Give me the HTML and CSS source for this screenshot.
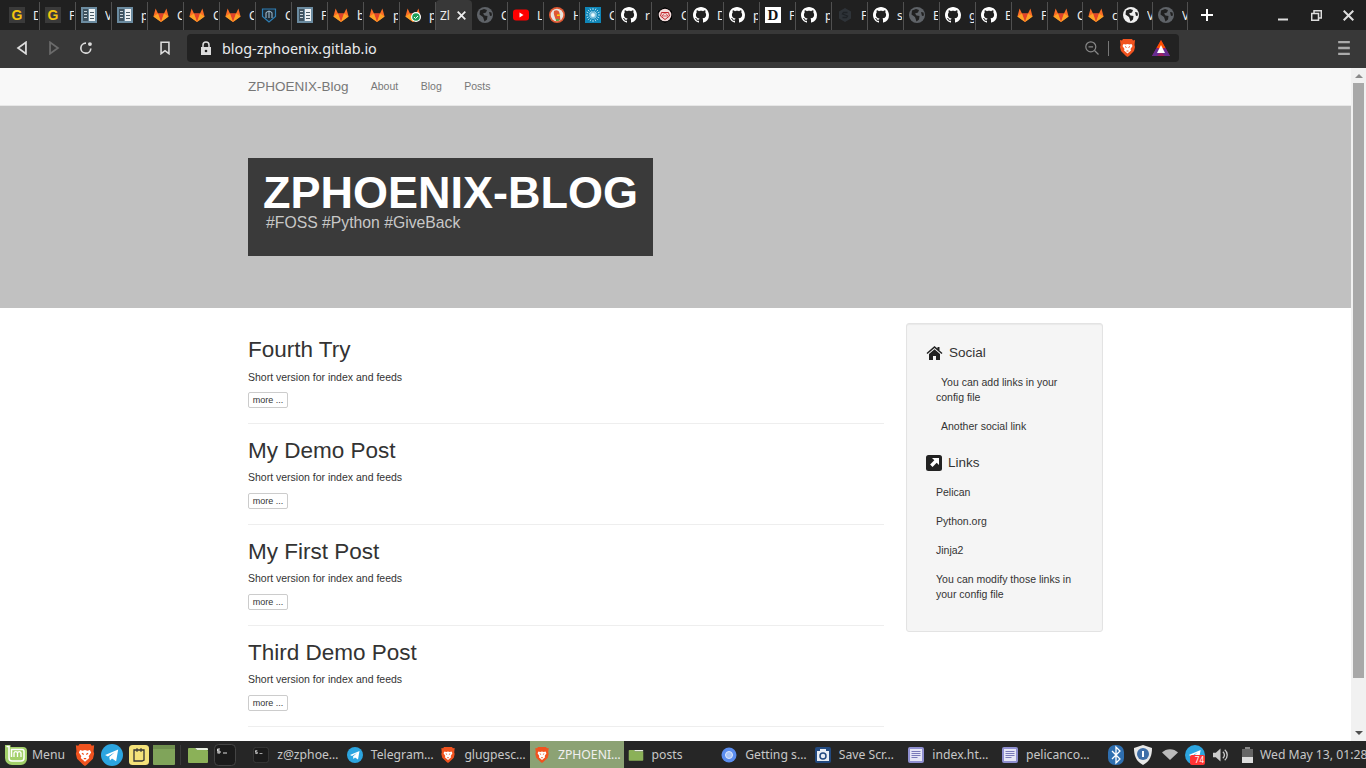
FILE: index.html
```html
<!DOCTYPE html>
<html lang="en">
<head>
    <meta charset="UTF-8">
    <meta name="viewport" content="width=device-width, initial-scale=1.0">
    <title>ZPHOENIX-Blog</title>
    <link rel="stylesheet" href="styles.css">
</head>
<body>
    <svg class="sprites" width="0" height="0">
        <symbol id="i-doc" viewBox="0 0 16 16"><rect width="16" height="16" fill="#6b8ba0"/><rect x="2" y="2" width="5" height="12" fill="#3f525f"/><rect x="8" y="2" width="6" height="12" fill="#eef2f4"/><path d="M3 4h3v1H3zM3 7h3v1H3zM3 10h3v1H3z" fill="#c9d4da"/><path d="M9 5h4v1H9zM9 8h4v1H9zM9 11h4v1H9z" fill="#4c5d68"/></symbol>
        <symbol id="i-gitlab" viewBox="0 0 16 16"><path d="M8 15 .4 9.4 2.6 1.5 5 6.6h6l2.400-5.100 2.200 7.900z" fill="#fc6d26"/><path d="M8 15 5 6.600h6z" fill="#e24329"/><path d="M8 15 .4 9.400 5 6.600zM8 15l7.600-5.600L11 6.600z" fill="#fca326"/></symbol>
        <symbol id="i-shield" viewBox="0 0 16 16"><path d="M1.500 2h13v7.500L8 15 1.500 9.500z" fill="#1d2b36" stroke="#2f7fb5" stroke-width="1.200"/><path d="M5 11V5.500L8 4l3 1.500V11M8 4v7" fill="none" stroke="#a9c4d6"/></symbol>
        <symbol id="i-globe" viewBox="0 0 16 16"><circle cx="8" cy="8" r="8" fill="currentColor"/><path d="M3 3.500 7 2l3 1-1 2.500-3 1 1.500 2 3 .5-.5 3.500-2.500 2L6 10 2.500 7.500zM12 5l2.500.5.5 3-2 .5z" fill="#202020"/></symbol>
        <symbol id="i-yt" viewBox="0 0 16 16"><rect y="2.500" width="16" height="11" rx="3" fill="#f00"/><path d="m6.500 5.500 4 2.500-4 2.500z" fill="#fff"/></symbol>
        <symbol id="i-ddg" viewBox="0 0 16 16"><circle cx="8" cy="8" r="8" fill="#de5833"/><circle cx="8" cy="8" r="6.300" fill="#e8e3df"/><path d="M5 4c2-1.500 5-1 5.500 2 .5 2 .5 5 1 7.500H7C6 10 4 7 5 4z" fill="#de5833"/><path d="M8 7.500h3.500l-1 1.500H8z" fill="#fdd20a"/><path d="M7 12h3.500l-1 2H7z" fill="#5aa845"/></symbol>
        <symbol id="i-burst" viewBox="0 0 16 16"><rect width="16" height="16" fill="#0f86b8"/><path d="M8 1v14M1 8h14M3 3l10 10M13 3 3 13M5 1.500l6 13M11 1.500l-6 13M1.500 5l13 6M14.500 5l-13 6" stroke="#cfeefa" stroke-width=".8" stroke-dasharray="2 1"/><circle cx="8" cy="8" r="2" fill="#e8fafe"/></symbol>
        <symbol id="i-github" viewBox="0 0 16 16"><path fill="#fff" d="M8 0C3.580 0 0 3.580 0 8c0 3.540 2.290 6.530 5.470 7.590.4.070.55-.17.55-.38 0-.19-.01-.82-.01-1.490-2.010.37-2.530-.49-2.690-.94-.09-.23-.48-.94-.82-1.130-.28-.15-.68-.52-.01-.53.63-.01 1.080.58 1.230.82.72 1.210 1.870.87 2.330.66.07-.52.28-.87.51-1.070-1.780-.2-3.640-.89-3.640-3.950 0-.87.31-1.590.82-2.150-.08-.2-.36-1.020.08-2.120 0 0 .67-.21 2.200.82.64-.18 1.320-.27 2-.27.68 0 1.360.09 2 .27 1.530-1.040 2.200-.82 2.200-.82.44 1.100.16 1.920.08 2.120.51.56.82 1.270.82 2.150 0 3.070-1.870 3.750-3.650 3.950.29.25.54.73.54 1.480 0 1.070-.01 1.930-.01 2.200 0 .21.15.46.55.38A8.013 8.013 0 0016 8c0-4.420-3.580-8-8-8z"/></symbol>
        <symbol id="i-d20" viewBox="0 0 16 16"><path d="M8 0l7 4v8l-7 4-7-4V4z" fill="#000"/><circle cx="8" cy="8" r="6.300" fill="#f3dcdc"/><path d="M4.500 5.500h7l1 3.500L8 12.500 3.500 9z" fill="none" stroke="#c4252b"/><path d="M8 5.500 5 9h6z" fill="none" stroke="#c4252b" stroke-width=".7"/></symbol>
        <symbol id="i-hex" viewBox="0 0 16 16"><path d="M8 1l6 3.500v7L8 15l-6-3.500v-7z" fill="#2e3338"/><path d="M10.500 5.500h-4l-1 1.500 5 2-1 1.500h-4" fill="none" stroke="#1e2226" stroke-width="1.300"/></symbol>
        <symbol id="i-brave" viewBox="0 0 16 18"><path d="M3.500 0h9l1 1.500L15.500 1 15 6l.5 2-1 4-5 5-1.500 1-1.500-1-5-5-1-4L1 6 .5 1l2 .5z" fill="#f1531f"/><path d="M4 5l2 .5L8 5l2 .5L12 5l1 2-2 3 .5 1.500L8 14.500 4.500 11.500 5 10 3 7z" fill="#fff"/><path d="M5.500 7.500 7 8.500M10.500 7.500 9 8.500M7 12h2" stroke="#f1531f"/></symbol>
        <symbol id="i-bat" viewBox="0 0 18 16"><path d="M9 0l9 16H0z" fill="#9e1f63"/><path d="M9 0l4.500 8H4.500z" fill="#ff5000"/><path d="M0 16l4.500-8L9 12l-4 4zM18 16l-4.500-8L9 12l4 4z" fill="#662d91"/><path d="M9 5l4 8H5z" fill="#fff"/></symbol>
        <symbol id="i-telegram" viewBox="0 0 16 16"><circle cx="8" cy="8" r="8" fill="#2ca5e0"/><path d="M3 8l9.500-4-1.500 8.500-3-2-1.500 1.500-.5-2.500 4-3.500-5 3z" fill="#fff"/></symbol>
        <symbol id="i-folder" viewBox="0 0 22 18"><path d="M1 3a1 1 0 011-1h6l2 2h10a1 1 0 011 1v11a1 1 0 01-1 1H2a1 1 0 01-1-1z" fill="#8bb158"/><path d="M8 2l2 2h11V3a1 1 0 00-1-1z" fill="#e8efe0"/></symbol>
        <symbol id="i-term" viewBox="0 0 22 22"><rect x=".5" y=".5" width="21" height="21" rx="4" fill="#1b1b1b" stroke="#444"/><path d="M4 5v4M6 5H3.500v2H6v2H3.500M9 9h4" stroke="#ddd" fill="none"/></symbol>
        <symbol id="i-textdoc" viewBox="0 0 16 16"><rect width="16" height="16" rx="2" fill="#8f8fd0"/><rect x="2" y="2" width="12" height="12" fill="#e6e6f6"/><path d="M3.500 4.500h9M3.500 6.500h9M3.500 8.500h9M3.500 10.500h6" stroke="#7a7ab8"/></symbol>
    </svg>

    <div class="screen">
        <div class="tabstrip">
            <div class="tab"><span class="fav-g">G</span><span class="tab-label">D</span></div>
            <div class="tab"><span class="fav-g">G</span><span class="tab-label">F</span></div>
            <div class="tab"><svg class="fav"><use href="#i-doc"/></svg><span class="tab-label">V</span></div>
            <div class="tab"><svg class="fav"><use href="#i-doc"/></svg><span class="tab-label">p</span></div>
            <div class="tab"><svg class="fav"><use href="#i-gitlab"/></svg><span class="tab-label">C</span></div>
            <div class="tab"><svg class="fav"><use href="#i-gitlab"/></svg><span class="tab-label">C</span></div>
            <div class="tab"><svg class="fav"><use href="#i-gitlab"/></svg><span class="tab-label">C</span></div>
            <div class="tab"><svg class="fav"><use href="#i-shield"/></svg><span class="tab-label">C</span></div>
            <div class="tab"><svg class="fav"><use href="#i-doc"/></svg><span class="tab-label">F</span></div>
            <div class="tab"><svg class="fav"><use href="#i-gitlab"/></svg><span class="tab-label">b</span></div>
            <div class="tab"><svg class="fav"><use href="#i-gitlab"/></svg><span class="tab-label">p</span></div>
            <div class="tab"><svg class="fav"><use href="#i-gitlab"/></svg><svg class="check" viewBox="0 0 10 10"><circle cx="5" cy="5" r="5" fill="#fff"/><circle cx="5" cy="5" r="3.800" fill="#1f9d55"/><path d="M3 5l1.500 1.500L7 4" fill="none" stroke="#fff"/></svg><span class="tab-label">p</span></div>
            <div class="tab tab-active"><span class="tab-label">Zl</span><svg class="tab-close" viewBox="0 0 9 9"><path d="M.7.700l7.600 7.600M8.300.700.700 8.300" stroke="#eee" stroke-width="1.800"/></svg></div>
            <div class="tab"><svg class="fav globe-dim"><use href="#i-globe"/></svg><span class="tab-label">C</span></div>
            <div class="tab"><svg class="fav"><use href="#i-yt"/></svg><span class="tab-label">L</span></div>
            <div class="tab"><svg class="fav"><use href="#i-ddg"/></svg><span class="tab-label">H</span></div>
            <div class="tab"><svg class="fav"><use href="#i-burst"/></svg><span class="tab-label">C</span></div>
            <div class="tab"><svg class="fav"><use href="#i-github"/></svg><span class="tab-label">r</span></div>
            <div class="tab"><svg class="fav"><use href="#i-d20"/></svg><span class="tab-label">C</span></div>
            <div class="tab"><svg class="fav"><use href="#i-github"/></svg><span class="tab-label">D</span></div>
            <div class="tab"><svg class="fav"><use href="#i-github"/></svg><span class="tab-label">p</span></div>
            <div class="tab"><span class="fav-d">D</span><span class="tab-label">F</span></div>
            <div class="tab"><svg class="fav"><use href="#i-github"/></svg><span class="tab-label">p</span></div>
            <div class="tab"><svg class="fav"><use href="#i-hex"/></svg><span class="tab-label">F</span></div>
            <div class="tab"><svg class="fav"><use href="#i-github"/></svg><span class="tab-label">s</span></div>
            <div class="tab"><svg class="fav globe-dim"><use href="#i-globe"/></svg><span class="tab-label">E</span></div>
            <div class="tab"><svg class="fav"><use href="#i-github"/></svg><span class="tab-label">g</span></div>
            <div class="tab"><svg class="fav"><use href="#i-github"/></svg><span class="tab-label">E</span></div>
            <div class="tab"><svg class="fav"><use href="#i-gitlab"/></svg><span class="tab-label">F</span></div>
            <div class="tab tab-narrow"><svg class="fav"><use href="#i-gitlab"/></svg><span class="tab-label">C</span></div>
            <div class="tab tab-narrow"><svg class="fav"><use href="#i-gitlab"/></svg><span class="tab-label">c</span></div>
            <div class="tab tab-narrow"><svg class="fav globe-bright"><use href="#i-globe"/></svg><span class="tab-label">V</span></div>
            <div class="tab tab-narrow"><svg class="fav globe-dim"><use href="#i-globe"/></svg><span class="tab-label">V</span></div>
            <svg class="new-tab" viewBox="0 0 12 12"><path d="M6 0v12M0 6h12" stroke="#fff" stroke-width="2"/></svg>
            <div class="win-controls">
                <svg viewBox="0 0 11 11"><path d="M0 9.500h10" stroke="#ddd" stroke-width="2"/></svg>
                <svg viewBox="0 0 11 11"><path d="M3 3V.7h7.300V8H8M.7 3.500h6.800v6.800H.7z" fill="none" stroke="#ddd" stroke-width="1.500"/></svg>
                <svg viewBox="0 0 11 11"><path d="M.7.700l9.600 9.600M10.300.700.700 10.300" stroke="#ddd" stroke-width="2"/></svg>
            </div>
        </div>

        <div class="toolbar">
            <button class="tool-btn"><svg viewBox="0 0 12 16"><path d="M10.500 1.500v13L1.500 8z" fill="none" stroke="#ddd" stroke-width="2"/></svg></button>
            <button class="tool-btn"><svg viewBox="0 0 12 16"><path d="M1.500 1.500v13l9-6.500z" fill="none" stroke="#6b6b6b" stroke-width="2"/></svg></button>
            <button class="tool-btn"><svg viewBox="0 0 16 16"><path d="M13.500 8.500A5.700 5.700 0 118 2.500" fill="none" stroke="#ddd" stroke-width="1.900"/><circle cx="12.500" cy="3.500" r="2.200" fill="#ddd"/></svg></button>
            <button class="tool-btn bookmark"><svg viewBox="0 0 12 16"><path d="M1.500 1.500h9v13L6 11l-4.500 3.500z" fill="none" stroke="#ddd" stroke-width="1.800"/></svg></button>
            <div class="urlbar">
                <svg class="lock" viewBox="0 0 12 14"><path d="M3 6V4a3 3 0 016 0v2" fill="none" stroke="#ddd" stroke-width="1.500"/><path d="M1 6h10v8H1z" fill="#ddd"/><circle cx="6" cy="10" r="1.300" fill="#222"/></svg>
                <span class="url">blog-zphoenix.gitlab.io</span>
                <svg class="zoom-out" viewBox="0 0 14 14"><circle cx="5.800" cy="5.800" r="5" fill="none" stroke="#888" stroke-width="1.200"/><path d="M3.500 5.800h4.600M9.500 9.500l4 4" stroke="#888" stroke-width="1.200"/></svg>
                <span class="url-sep"></span>
                <svg class="shield-btn"><use href="#i-brave"/></svg>
                <svg class="bat-btn"><use href="#i-bat"/></svg>
            </div>
            <button class="tool-btn menu-btn"><svg viewBox="0 0 12 12"><path d="M1 1h10M1 6h10M1 11h10" stroke="#aaa" stroke-width="2"/></svg></button>
        </div>

        <div class="viewport">
            <div class="site">
                <nav class="navbar">
                    <div class="container navbar-inner">
                        <a class="brand" href="#">ZPHOENIX-Blog</a>
                        <a class="nav-link" href="#">About</a>
                        <a class="nav-link" href="#">Blog</a>
                        <a class="nav-link" href="#">Posts</a>
                    </div>
                </nav>
                <header class="hero">
                    <div class="container">
                        <div class="hero-box">
                            <h1>ZPHOENIX-BLOG</h1>
                            <p>#FOSS #Python #GiveBack</p>
                        </div>
                    </div>
                </header>
                <div class="container columns">
                    <main class="posts">
                        <article class="post">
                            <h2>Fourth Try</h2>
                            <p>Short version for index and feeds</p>
                            <a class="more" href="#">more ...</a>
                        </article>
                        <article class="post">
                            <h2>My Demo Post</h2>
                            <p>Short version for index and feeds</p>
                            <a class="more" href="#">more ...</a>
                        </article>
                        <article class="post">
                            <h2>My First Post</h2>
                            <p>Short version for index and feeds</p>
                            <a class="more" href="#">more ...</a>
                        </article>
                        <article class="post">
                            <h2>Third Demo Post</h2>
                            <p>Short version for index and feeds</p>
                            <a class="more" href="#">more ...</a>
                        </article>
                    </main>
                    <aside class="well">
                        <h3 class="well-head">
                            <svg class="icon-home" viewBox="0 0 16 14"><path d="M8 0 0 7l1 1 7-6 7 6 1-1-3-2.600V1h-2v1.600z" fill="#222"/><path d="M2.500 8 8 3.300 13.500 8v6H9.500v-4h-3v4h-4z" fill="#222"/></svg>
                            Social
                        </h3>
                        <ul class="well-list">
                            <li class="indent"><a href="#">You can add links in your config file</a></li>
                            <li class="indent"><a href="#">Another social link</a></li>
                        </ul>
                        <h3 class="well-head">
                            <svg class="icon-link" viewBox="0 0 16 16"><rect width="16" height="16" rx="2.500" fill="#222"/><path d="M6 3h7v7l-2.300-2.300-4.200 4.200-2.400-2.400 4.200-4.200z" fill="#fff"/></svg>
                            Links
                        </h3>
                        <ul class="well-list">
                            <li><a href="#">Pelican</a></li>
                            <li><a href="#">Python.org</a></li>
                            <li><a href="#">Jinja2</a></li>
                            <li><a href="#">You can modify those links in your config file</a></li>
                        </ul>
                    </aside>
                </div>
            </div>
            <div class="scrollbar">
                <span class="arrow-up"></span>
                <span class="thumb"></span>
                <span class="arrow-down"></span>
            </div>
        </div>

        <div class="taskbar">
            <div class="menu">
                <svg class="mint" viewBox="0 0 22 21"><path d="M0 1h5.500v2H18a4 4 0 014 4v8a6 6 0 01-6 6H7a7 7 0 01-7-7z" fill="#a3d06a"/><path d="M1.500 2.500h2.500V14a3 3 0 003 3h9a3 3 0 003-3V7.500a2 2 0 00-2-2H6.500V13" fill="none" stroke="#fff" stroke-width="1.500"/><path d="M9 13V8.500m0 .5a1.800 1.800 0 013.500 0v4m0-4a1.800 1.800 0 013.500 0v4" fill="none" stroke="#fff" stroke-width="1.300"/></svg>
                <span>Menu</span>
            </div>
            <div class="launchers">
                <svg class="launch launch-brave"><use href="#i-brave"/></svg>
                <svg class="launch launch-tg"><use href="#i-telegram"/></svg>
                <svg class="launch launch-note" viewBox="0 0 20 20"><rect width="20" height="20" rx="3.500" fill="#f4e27a"/><path d="M5 5h10v10l-2 1H5z" fill="none" stroke="#333" stroke-width="1.300"/><path d="M8 3v4M12 3v4" stroke="#333"/></svg>
                <svg class="launch launch-win" viewBox="0 0 22 20"><rect width="22" height="20" rx="1" fill="#80a45a"/><rect width="22" height="4" fill="#6f8f4e"/></svg>
                <span class="launch-sep"></span>
                <svg class="launch launch-folder"><use href="#i-folder"/></svg>
                <svg class="launch launch-term"><use href="#i-term"/></svg>
            </div>
            <div class="windows">
                <div class="win"><svg class="win-icon"><use href="#i-term"/></svg><span>z@zphoe…</span></div>
                <div class="win"><svg class="win-icon"><use href="#i-telegram"/></svg><span>Telegram…</span></div>
                <div class="win"><svg class="win-icon"><use href="#i-brave"/></svg><span>glugpesc…</span></div>
                <div class="win win-active"><svg class="win-icon"><use href="#i-brave"/></svg><span>ZPHOENI…</span></div>
                <div class="win"><svg class="win-icon"><use href="#i-folder"/></svg><span>posts</span></div>
                <div class="win"><svg class="win-icon" viewBox="0 0 16 16"><circle cx="8" cy="8" r="7.500" fill="#5b8def"/><circle cx="8" cy="8" r="3.500" fill="#a9c4f7" stroke="#dfe9fc"/></svg><span>Getting s…</span></div>
                <div class="win"><svg class="win-icon" viewBox="0 0 16 16"><rect width="16" height="16" rx="2" fill="#234a80"/><rect x="2" y="4" width="12" height="10" fill="#e9eef5"/><circle cx="8" cy="9" r="3" fill="none" stroke="#234a80" stroke-width="1.500"/><rect x="5" y="2" width="6" height="2" fill="#e9eef5"/></svg><span>Save Scr…</span></div>
                <div class="win"><svg class="win-icon"><use href="#i-textdoc"/></svg><span>index.ht…</span></div>
                <div class="win"><svg class="win-icon"><use href="#i-textdoc"/></svg><span>pelicanco…</span></div>
            </div>
            <div class="tray">
                <svg class="tray-bt" viewBox="0 0 16 20"><rect width="16" height="20" rx="7" fill="#2f6fb0"/><path d="M4 6l8 8-4 4V2l4 4-8 8" fill="none" stroke="#fff" stroke-width="1.300"/></svg>
                <svg class="tray-shield" viewBox="0 0 20 20"><path d="M10 0l9 3c0 8-2 13-9 17C3 16 1 11 1 3z" fill="#e8e8e8"/><circle cx="10" cy="9" r="6" fill="#3f6fa8"/><path d="M10 6v6" stroke="#fff" stroke-width="2"/></svg>
                <svg class="tray-wifi" viewBox="0 0 16 11"><path d="M0 3.500C4-1 12-1 16 3.500L8 11z" fill="#bbb"/></svg>
                <div class="tray-tg">
                    <svg><use href="#i-telegram"/></svg>
                    <span class="badge">74</span>
                </div>
                <svg class="tray-vol" viewBox="0 0 16 14"><path d="M0 4.500h3L8 0v14l-5-4.500H0z" fill="#ccc"/><path d="M10.500 3.500a4.500 4.500 0 010 7M12.500 1.500a7 7 0 010 11" fill="none" stroke="#ccc" stroke-width="1.400"/></svg>
                <svg class="tray-batt" viewBox="0 0 11 16"><rect x="3" width="5" height="2" fill="#888"/><rect y="2" width="11" height="14" fill="#666"/><rect y="10" width="11" height="6" fill="#ddd"/></svg>
                <span class="clock">Wed May 13, 01:28</span>
            </div>
        </div>
    </div>
</body>
</html>
```

FILE: styles.css
```css
html, body {
    margin: 0;
    padding: 0;
    overflow: hidden;
}
body {
    font-family: "Liberation Sans", Arial, sans-serif;
}
a {
    text-decoration: none;
    color: inherit;
}
.sprites {
    display: none;
}
.screen {
    display: flex;
    flex-direction: column;
    width: 1366px;
    height: 768px;
    overflow: hidden;
}

/* browser tabs */
.tabstrip {
    display: flex;
    align-items: stretch;
    flex: 0 0 30px;
    padding-left: 4px;
    background-color: #202020;
    font-family: "Noto Sans", sans-serif;
}
.tab {
    position: relative;
    display: flex;
    align-items: center;
    box-sizing: border-box;
    flex: 0 0 36px;
    margin-top: 2px;
    padding: 0 0 2px 5px;
    border-right: 1px solid #505050;
    overflow: hidden;
}
.tab-narrow {
    flex-basis: 35px;
}
.tab-active {
    background-color: #383838;
    border-right: none;
    border-radius: 4px 4px 0 0;
    padding: 2px 0 2px 4px;
    margin-top: 0;
}
.fav, .fav-g, .fav-d {
    flex: 0 0 16px;
    width: 16px;
    height: 16px;
}
.fav-g {
    background-color: #3a3a3a;
    color: #f2c40f;
    font: bold 14px/16px "Liberation Sans", sans-serif;
    text-align: center;
}
.fav-d {
    background-color: #fff;
    color: #111;
    font: bold 15px/16px "Liberation Serif", serif;
    text-align: center;
}
.globe-dim {
    color: #5f6368;
}
.globe-bright {
    color: #f0f0f0;
}
.check {
    position: absolute;
    left: 11px;
    top: 10px;
    width: 10px;
    height: 10px;
}
.tab-label {
    flex: 0 0 5px;
    width: 5px;
    margin-left: 8px;
    overflow: hidden;
    color: #eee;
    font-size: 12px;
    white-space: nowrap;
}
.tab-active .tab-label {
    flex-basis: 11px;
    width: 11px;
    margin-left: 0;
}
.tab-close {
    flex: 0 0 9px;
    width: 9px;
    height: 9px;
    margin-left: 6px;
}
.new-tab {
    flex: 0 0 12px;
    width: 12px;
    height: 12px;
    margin: 9px 0 0 13px;
}
.win-controls {
    display: flex;
    align-items: center;
    gap: 21.5px;
    margin-left: auto;
    padding-right: 12px;
}
.win-controls svg {
    width: 11px;
    height: 11px;
}

/* browser toolbar */
.toolbar {
    display: flex;
    align-items: center;
    box-sizing: border-box;
    flex: 0 0 38px;
    padding: 0 0 2px 6px;
    background-color: #383838;
}
.tool-btn {
    display: flex;
    align-items: center;
    justify-content: center;
    width: 32px;
    height: 28px;
    padding: 0;
    background: none;
    border: none;
}
.tool-btn svg {
    width: 14px;
    height: 14px;
}
.bookmark {
    margin-left: 47px;
}
.menu-btn {
    margin-left: 149px;
}
.urlbar {
    display: flex;
    align-items: center;
    width: 992px;
    height: 28px;
    margin-left: 6px;
    background-color: #222;
    border-radius: 4px;
}
.lock {
    width: 12px;
    height: 14px;
    margin-left: 13px;
}
.url {
    margin-left: 10px;
    color: #e8eaed;
    font-family: "Noto Sans", sans-serif;
    font-size: 14.4px;
}
.zoom-out {
    width: 14px;
    height: 14px;
    margin-left: auto;
}
.url-sep {
    width: 1px;
    height: 15px;
    margin: 0 10px 0 9px;
    background-color: #777;
}
.shield-btn {
    width: 17px;
    height: 18px;
}
.bat-btn {
    width: 18px;
    height: 16px;
    margin: 0 9px 0 16px;
}

/* page */
.viewport {
    display: flex;
    flex: 1 1 auto;
    min-height: 0;
}
.site {
    flex: 1 1 auto;
    min-width: 0;
    overflow: hidden;
    background-color: #fff;
    color: #333;
}
.container {
    box-sizing: border-box;
    width: 877.5px;
    margin: 0 auto;
    padding: 0 11.25px;
}
.navbar {
    height: 37px;
    background-color: #f8f8f8;
    border-bottom: 1px solid #e7e7e7;
}
.navbar-inner {
    display: flex;
    align-items: center;
    height: 100%;
}
.brand {
    margin-right: 11px;
    color: #777;
    font-size: 13.5px;
}
.nav-link {
    margin-bottom: 2px;
    padding: 0 11.25px;
    color: #777;
    font-size: 10.5px;
}
.hero {
    height: 202px;
    overflow: hidden;
    background-color: #c1c1c1;
}
.hero-box {
    box-sizing: border-box;
    width: 405px;
    height: 98px;
    margin-top: 52px;
    padding: 15px 15px 0;
    background-color: #3a3a3a;
}
.hero-box h1 {
    margin: 0;
    color: #fff;
    font-size: 45px;
    line-height: 40px;
}
.hero-box p {
    margin: 0 0 0 3px;
    color: #c8c8c8;
    font-size: 15.75px;
    line-height: 20px;
}
.columns {
    display: flex;
    gap: 22px;
}
.posts {
    flex: 0 0 636px;
    width: 636px;
    padding-top: 15.5px;
}
.post {
    height: 99.9px;
    border-bottom: 1px solid #eee;
}
.post h2 {
    margin: 0;
    padding-top: 11.5px;
    font-size: 22.5px;
    font-weight: 500;
    line-height: 30px;
}
.post p {
    margin: 4.55px 0 4.7px;
    font-size: 10.5px;
    line-height: 15px;
}
.more {
    display: inline-block;
    box-sizing: border-box;
    width: 40px;
    height: 16px;
    border: 1px solid #ccc;
    border-radius: 2px;
    background-color: #fff;
    font-size: 9px;
    line-height: 14px;
    text-align: center;
}
.well {
    box-sizing: border-box;
    flex: 0 0 197px;
    width: 197px;
    height: 309px;
    margin-top: 15px;
    padding: 14px 19px;
    background-color: #f5f5f5;
    border: 1px solid #e3e3e3;
    border-radius: 3px;
    box-shadow: inset 0 1px 1px rgba(0, 0, 0, .05);
}
.well-head {
    display: flex;
    align-items: center;
    gap: 6px;
    margin: 0;
    color: #333;
    font-size: 13.5px;
    font-weight: 500;
    line-height: 30px;
}
.icon-home {
    width: 17px;
    height: 14px;
}
.icon-link {
    width: 16px;
    height: 16px;
}
.well-list {
    margin: 0 0 7px;
    padding: 0 0 0 10px;
    list-style: none;
    font-size: 10.5px;
    line-height: 15px;
}
.well-list li {
    padding: 7px 0;
}
.well-list .indent {
    text-indent: 5px;
}

/* scrollbar */
.scrollbar {
    display: flex;
    flex-direction: column;
    align-items: center;
    flex: 0 0 15px;
    box-sizing: border-box;
    padding: 6px 0;
    background-color: #f1f1f1;
}
.arrow-up, .arrow-down {
    width: 0;
    height: 0;
    border-left: 4px solid transparent;
    border-right: 4px solid transparent;
}
.arrow-up {
    border-bottom: 4px solid #8a8a8a;
}
.arrow-down {
    border-top: 4px solid #505050;
    margin-top: auto;
}
.thumb {
    width: 11px;
    height: 595px;
    margin-top: 5px;
    background-color: #a8a8a8;
}

/* desktop panel */
.taskbar {
    display: flex;
    align-items: center;
    flex: 0 0 27px;
    background-color: #262626;
    color: #c8c8c8;
    font-family: "Noto Sans", sans-serif;
    font-size: 12.2px;
    white-space: nowrap;
}
.menu {
    display: flex;
    align-items: center;
    flex: 0 0 75px;
    padding-left: 5px;
    box-sizing: border-box;
}
.mint {
    width: 22px;
    height: 21px;
    margin-right: 5px;
}
.launchers {
    display: flex;
    align-items: center;
    flex: 0 0 174.2px;
}
.launch {
    flex: none;
}
.launch-brave {
    width: 20px;
    height: 22px;
}
.launch-tg {
    width: 22px;
    height: 22px;
    margin-left: 6px;
}
.launch-note {
    width: 20px;
    height: 20px;
    margin-left: 6px;
}
.launch-win {
    width: 22px;
    height: 20px;
    margin-left: 4px;
}
.launch-sep {
    width: 1px;
    height: 20px;
    margin: 0 6px 0 5px;
    background-color: #3a3a3a;
}
.launch-folder {
    width: 22px;
    height: 18px;
}
.launch-term {
    width: 22px;
    height: 22px;
    margin-left: 5px;
}
.windows {
    display: flex;
    flex: 0 0 842.4px;
}
.win {
    display: flex;
    align-items: center;
    gap: 8px;
    box-sizing: border-box;
    flex: 0 0 93.6px;
    height: 27px;
    padding-left: 4px;
    overflow: hidden;
}
.win-active {
    background-color: #8ca274;
    color: #f0f0f0;
}
.win-icon {
    flex: 0 0 16px;
    width: 16px;
    height: 16px;
}
.tray {
    display: flex;
    align-items: center;
    flex: 1 1 auto;
    padding-left: 16.4px;
}
.tray-bt {
    width: 16px;
    height: 20px;
}
.tray-shield {
    width: 20px;
    height: 20px;
    margin-left: 9.5px;
}
.tray-wifi {
    width: 16px;
    height: 11px;
    margin-left: 8.5px;
}
.tray-tg {
    position: relative;
    width: 20px;
    height: 20px;
    margin-left: 7px;
}
.tray-tg svg {
    width: 20px;
    height: 20px;
}
.badge {
    position: absolute;
    right: 0;
    bottom: 0;
    width: 15px;
    height: 10px;
    padding-right: 1px;
    box-sizing: border-box;
    background-color: #f33;
    border-radius: 2px;
    color: #fff;
    font-size: 8px;
    line-height: 10px;
    text-align: right;
}
.tray-vol {
    width: 15px;
    height: 14px;
    margin-left: 8px;
}
.tray-batt {
    width: 11px;
    height: 16px;
    margin-left: 14px;
}
.clock {
    margin-left: 7px;
}
```
